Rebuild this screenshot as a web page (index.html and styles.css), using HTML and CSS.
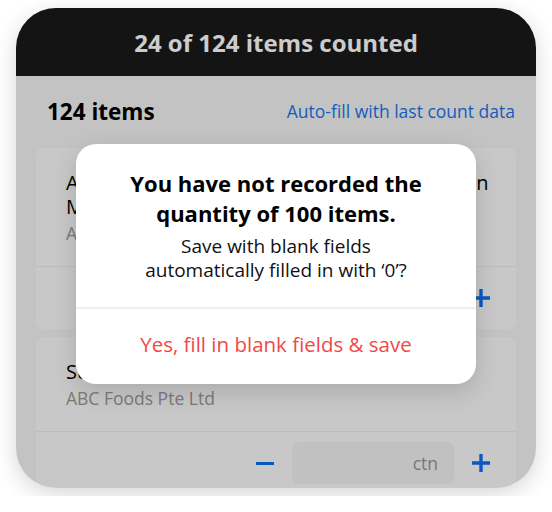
FILE: index.html
```html
<!DOCTYPE html>
<html>
<head>
  <title>Stock Count</title>
  <link rel="stylesheet" href="styles.css">
</head>
<body>
  <div class="frame">
    <div class="topbar">24 of 124 items counted</div>

    <div class="content">
      <div class="list-head">
        <span class="count">124 items</span>
        <a class="autofill" href="#">Auto-fill with last count data</a>
      </div>

      <div class="item">
        <div class="item-info">
          <div class="item-name">Ayam Brand Sardines in Tomato Sauce Green Multipack 3 x 155g</div>
          <div class="item-supplier">ABC Foods Pte Ltd</div>
        </div>
        <div class="item-qty">
          <span class="minus"></span>
          <div class="qty-box">ctn</div>
          <svg class="plus" width="18" height="18" viewBox="0 0 18 18"><path d="M9 0v18M0 9h18" stroke="currentColor" stroke-width="3.4"/></svg>
        </div>
      </div>

      <div class="item">
        <div class="item-info">
          <div class="item-name">Sunflower Oil 2L</div>
          <div class="item-supplier">ABC Foods Pte Ltd</div>
        </div>
        <div class="item-qty">
          <span class="minus"></span>
          <div class="qty-box">ctn</div>
          <svg class="plus" width="18" height="18" viewBox="0 0 18 18"><path d="M9 0v18M0 9h18" stroke="currentColor" stroke-width="3.4"/></svg>
        </div>
      </div>
    </div>

    <div class="scrim">
      <div class="dialog">
        <div class="dialog-body">
          <h2>You have not recorded the quantity of 100 items.</h2>
          <p>Save with blank fields<br>automatically filled in with ‘0’?</p>
        </div>
        <button class="dialog-action">Yes, fill in blank fields &amp; save</button>
      </div>
    </div>
  </div>
</body>
</html>
```

FILE: styles.css
```css
body {
    margin: 0;
    padding: 8px 16px;
    background: #fff;
    font-family: "Open Sans", "Noto Sans", sans-serif;
}

.frame {
    position: relative;
    width: 520px;
    height: 480px;
    border-radius: 40px;
    overflow: hidden;
    background: #f4f4f4;
    box-shadow: 0 6px 22px rgba(0, 0, 0, 0.16);
}

.topbar {
    height: 68px;
    display: flex;
    align-items: center;
    justify-content: center;
    background: #191919;
    color: #fff;
    font-size: 24px;
    font-weight: 700;
}

.content {
    padding: 0 20px;
}

.list-head {
    height: 70px;
    display: flex;
    align-items: center;
    justify-content: space-between;
    padding: 0 1px 2px 11px;
}

.count {
    font-size: 22.5px;
    font-weight: 700;
    color: #000;
}

.autofill {
    font-size: 17.5px;
    color: #1a74ee;
    text-decoration: none;
}

.item {
    background: #fbfbfb;
    border-radius: 8px;
    margin-bottom: 8px;
}

.item-info {
    padding: 23px 24px 21px 30px;
    border-bottom: 1px solid #ebebeb;
}

.item-name {
    font-size: 20px;
    line-height: 24px;
    color: #000;
}

.item-supplier {
    margin-top: 2px;
    font-size: 17.5px;
    line-height: 24px;
    color: #999;
}

.item-qty {
    display: flex;
    align-items: center;
    justify-content: flex-end;
    gap: 18px;
    padding: 10px 26px 10px 0;
}

.minus {
    width: 18px;
    height: 3px;
    background: #0d6ff0;
}

.qty-box {
    width: 146px;
    height: 42px;
    padding: 0 16px 0 0;
    border-radius: 6px;
    background: #f2f2f2;
    color: #959595;
    font-size: 17.5px;
    display: flex;
    align-items: center;
    justify-content: flex-end;
}

.plus {
    color: #0d6ff0;
}

.scrim {
    position: absolute;
    inset: 0;
    background: rgba(0, 0, 0, 0.2);
    display: flex;
    align-items: center;
    justify-content: center;
    padding-top: 32px;
}

.dialog {
    width: 400px;
    background: #fff;
    border-radius: 20px;
    box-shadow: 0 8px 24px rgba(0, 0, 0, 0.15);
    text-align: center;
}

.dialog-body {
    padding: 24px 20px 25px;
    border-bottom: 2px solid #f0f0f0;
}

.dialog-body h2 {
    margin: 0 0 6px;
    font-size: 22px;
    line-height: 30px;
    font-weight: 700;
    color: #000;
}

.dialog-body p {
    margin: 0;
    font-size: 19px;
    line-height: 24px;
    color: #111;
}

.dialog-action {
    display: block;
    width: 100%;
    height: 75px;
    padding: 0 0 5px;
    border: none;
    background: none;
    font-family: inherit;
    font-size: 20.5px;
    color: #f04848;
    cursor: pointer;
}
```
